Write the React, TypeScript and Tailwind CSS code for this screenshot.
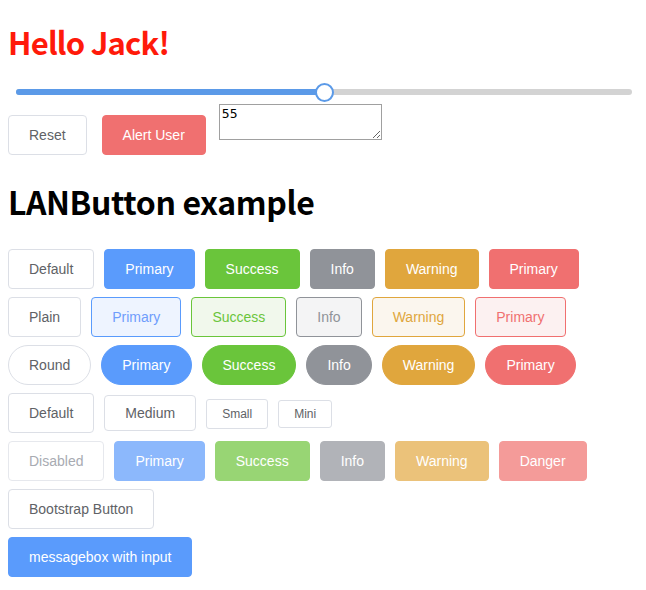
import React from "react";

const base =
  "inline-flex items-center justify-center border leading-[14px] text-[14px] px-[20px] py-[12px] rounded-[4px] whitespace-nowrap";

function Btn({ cls, children }: { cls: string; children: React.ReactNode }) {
  return <button className={`${base} ${cls}`}>{children}</button>;
}

const def = "bg-white border-[#dcdfe6] text-[#606266]";
const primary = "bg-[#5a9bfc] border-[#5a9bfc] text-white";
const success = "bg-[#6ac53b] border-[#6ac53b] text-white";
const info = "bg-[#909399] border-[#909399] text-white";
const warning = "bg-[#e0a63d] border-[#e0a63d] text-white";
const danger = "bg-[#f07070] border-[#f07070] text-white";

export default function App() {
  return (
    <div className="px-2 pb-4 text-[#606266]" style={{ fontFamily: '"Liberation Sans", Arial, sans-serif' }}>
      <h1
        className="text-[31px] font-bold leading-[42px] pt-[21px] tracking-[-0.8px] text-[#ff1a0a]"
        style={{ fontFamily: '"Noto Sans CJK KR", "Noto Sans", sans-serif' }}
      >
        Hello Jack!
      </h1>
      <div className="relative mt-[20px] ml-2 w-[616px] h-[18px]">
        <div className="absolute left-0 right-0 top-[6px] h-[6px] rounded-full bg-[#d3d3d3]" />
        <div className="absolute left-0 top-[6px] h-[6px] w-[309px] rounded-full bg-[#5b9ae8]" />
        <div className="absolute left-[299px] top-0 w-[19px] h-[19px] rounded-full bg-white border-2 border-[#5b9ae8]" />
      </div>
      <div className="flex items-end mt-[3px]">
        <Btn cls={def}>Reset</Btn>
        <Btn cls={`${danger} ml-[15px]`}>Alert User</Btn>
        <textarea
          defaultValue="55"
          className="ml-[13px] mb-[15px] w-[163px] h-[36px] border border-[#a0a0a0] text-black text-[13px] leading-[15px] px-[2px] py-[1px] bg-white"
          style={{ fontFamily: '"DejaVu Sans Mono", monospace', resize: "both" }}
        />
      </div>
      <h1
        className="text-[32px] font-bold leading-[42px] mt-[25px] tracking-[-0.4px] text-black"
        style={{ fontFamily: '"Noto Sans CJK KR", "Noto Sans", sans-serif' }}
      >
        LANButton example
      </h1>
      <div className="mt-[27px] flex flex-col gap-[8px]">
        <div className="flex gap-[10px]">
          <Btn cls={def}>Default</Btn>
          <Btn cls={primary}>Primary</Btn>
          <Btn cls={success}>Success</Btn>
          <Btn cls={info}>Info</Btn>
          <Btn cls={warning}>Warning</Btn>
          <Btn cls={danger}>Primary</Btn>
        </div>
        <div className="flex gap-[10px]">
          <Btn cls={def}>Plain</Btn>
          <Btn cls="bg-[#eef4ff] border-[#5a9bfc] text-[#6f9dfc]">Primary</Btn>
          <Btn cls="bg-[#f1f8ec] border-[#6ac53b] text-[#6ac53b]">Success</Btn>
          <Btn cls="bg-[#f4f4f5] border-[#909399] text-[#909399]">Info</Btn>
          <Btn cls="bg-[#fbf6ee] border-[#e0a63d] text-[#e0a63d]">Warning</Btn>
          <Btn cls="bg-[#fcf1f1] border-[#f07070] text-[#f07070]">Primary</Btn>
        </div>
        <div className="flex gap-[10px]">
          <Btn cls={`${def} rounded-[20px]`}>Round</Btn>
          <Btn cls={`${primary} rounded-[20px]`}>Primary</Btn>
          <Btn cls={`${success} rounded-[20px]`}>Success</Btn>
          <Btn cls={`${info} rounded-[20px]`}>Info</Btn>
          <Btn cls={`${warning} rounded-[20px]`}>Warning</Btn>
          <Btn cls={`${danger} rounded-[20px]`}>Primary</Btn>
        </div>
        <div className="flex gap-[10px] items-baseline">
          <Btn cls={def}>Default</Btn>
          <button className={`inline-flex items-center border leading-[14px] text-[14px] px-[20px] py-[10px] rounded-[4px] ${def}`}>
            Medium
          </button>
          <button className={`inline-flex items-center border leading-[12px] text-[12px] px-[15px] py-[8px] rounded-[3px] ${def}`}>
            Small
          </button>
          <button className={`inline-flex items-center border leading-[12px] text-[12px] px-[15px] py-[7px] rounded-[3px] ${def}`}>
            Mini
          </button>
        </div>
        <div className="flex gap-[10px]">
          <Btn cls="bg-white border-[#e6e8ed] text-[#a8abb2]">Disabled</Btn>
          <Btn cls="bg-[#8cb8fc] border-[#8cb8fc] text-white">Primary</Btn>
          <Btn cls="bg-[#98d574] border-[#98d574] text-white">Success</Btn>
          <Btn cls="bg-[#b1b3b8] border-[#b1b3b8] text-white">Info</Btn>
          <Btn cls="bg-[#ebc27a] border-[#ebc27a] text-white">Warning</Btn>
          <Btn cls="bg-[#f49b99] border-[#f49b99] text-white">Danger</Btn>
        </div>
        <div className="flex">
          <Btn cls={def}>Bootstrap Button</Btn>
        </div>
        <div className="flex">
          <Btn cls={primary}>messagebox with input</Btn>
        </div>
      </div>
    </div>
  );
}
